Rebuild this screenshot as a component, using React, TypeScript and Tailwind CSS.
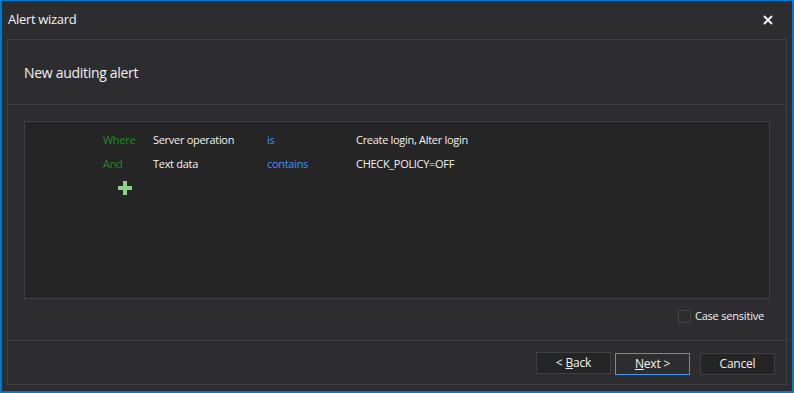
import React from "react";

type Rule = { op: string; field: string; cond: string; value: string };

const rules: Rule[] = [
  { op: "Where", field: "Server operation", cond: "is", value: "Create login, Alter login" },
  { op: "And", field: "Text data", cond: "contains", value: "CHECK_POLICY=OFF" },
];

function WizardButton({ children, active }: { children: React.ReactNode; active?: boolean }) {
  return (
    <button
      className={
        active
          ? "w-[75px] h-[22px] border border-[#3399ff] bg-[#2d2d30] text-[#f1f1f1] text-[12px] tracking-[-0.2px]"
          : "w-[75px] h-[22px] border border-[#3f3f46] bg-[#252526] text-[#f1f1f1] text-[12px] tracking-[-0.2px]"
      }
    >
      {children}
    </button>
  );
}

export default function App() {
  return (
    <div
      className="w-[794px] h-[393px] bg-[#2d2d30] border-t border-x-2 border-b-2 border-[#007acc] flex flex-col text-[#f1f1f1]"
      style={{ fontFamily: '"Open Sans", "Noto Sans", sans-serif' }}
    >
      {/* title bar */}
      <div className="h-[38px] flex items-center justify-between pl-[6px] pr-[19px]">
        <span className="text-[13px] tracking-[-0.3px]">Alert wizard</span>
        <svg width="10" height="10" viewBox="0 0 10 10">
          <path d="M1 1L9 9M9 1L1 9" stroke="#f1f1f1" strokeWidth="2" />
        </svg>
      </div>

      <div className="flex-1 mx-[5px] mb-[6px] border border-[#3f3f46] flex flex-col">
        {/* header */}
        <div className="h-[65px] flex items-center pl-[16px] border-b border-[#3f3f46]">
          <span className="text-[14px] tracking-[-0.3px]">New auditing alert</span>
        </div>

        {/* body */}
        <div className="flex-1 flex flex-col px-[16px] pt-[16px] border-b border-[#3f3f46]">
          <div className="h-[178px] bg-[#252526] border border-[#3f3f46] pt-[6px] pl-[78px]">
            {rules.map((r) => (
              <div
                key={r.op}
                className="h-[24px] grid grid-cols-[50px_114px_89px_1fr] items-center text-[11px] tracking-[-0.3px]"
              >
                <span className="text-[#1e8c1e]">{r.op}</span>
                <span>{r.field}</span>
                <span className="text-[#3794ff]">{r.cond}</span>
                <span>{r.value}</span>
              </div>
            ))}
            <div className="h-[24px] flex items-center pl-[15px]">
              <svg width="14" height="14" viewBox="0 0 14 14">
                <path d="M5 0H9V5H14V9H9V14H5V9H0V5H5Z" fill="#8ed08e" />
              </svg>
            </div>
          </div>
          <div className="flex justify-end items-center gap-[4px] mt-[9px] pr-[6px]">
            <span className="w-[13px] h-[13px] border border-[#434346] bg-[#2d2d30]" />
            <span className="text-[11px] tracking-[-0.2px]">Case sensitive</span>
          </div>
        </div>

        {/* footer */}
        <div className="h-[43px] flex items-center justify-end pr-[11px]">
          <div className="flex items-center">
            <WizardButton>
              &lt; <span className="underline">B</span>ack
            </WizardButton>
            <div className="ml-[4px]">
              <WizardButton active>
                <span className="underline">N</span>ext &gt;
              </WizardButton>
            </div>
            <div className="ml-[10px]">
              <WizardButton>Cancel</WizardButton>
            </div>
          </div>
        </div>
      </div>
    </div>
  );
}
